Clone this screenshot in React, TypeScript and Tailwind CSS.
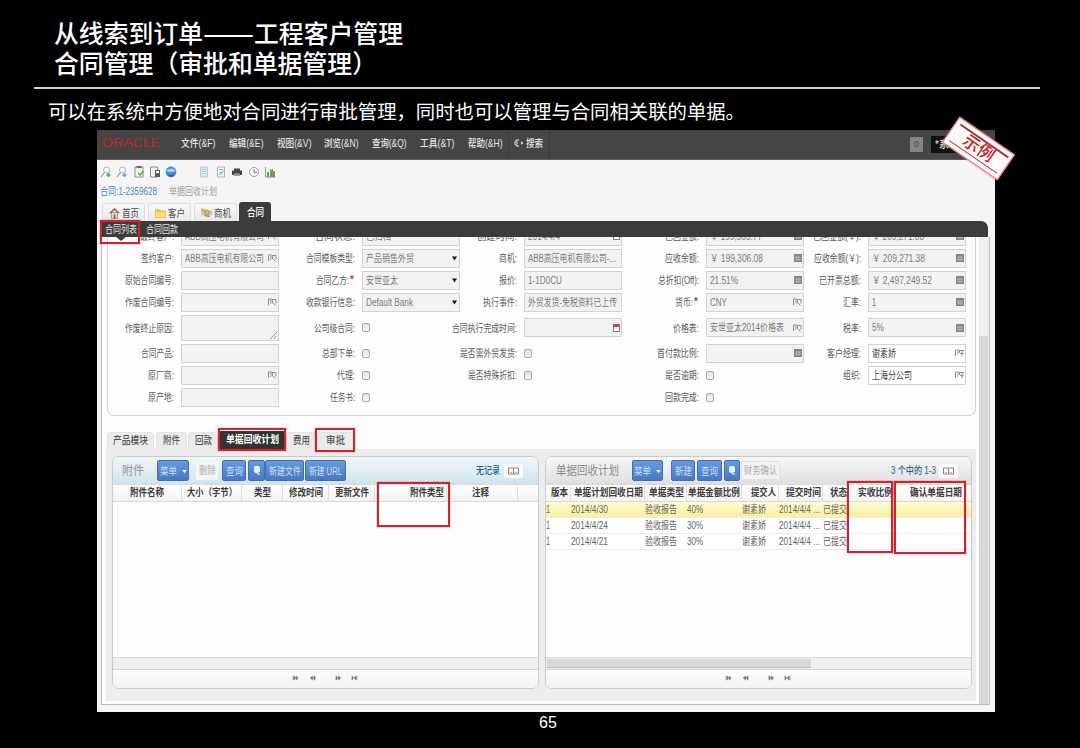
import { useLayoutEffect, useRef } from "react";
import type { ReactNode } from "react";

/** One line of text condensed or stretched to an exact width. */
function Fit({ w, className = "", children }: { w: number; className?: string; children: ReactNode }) {
  const ref = useRef<HTMLSpanElement>(null);
  useLayoutEffect(() => {
    const el = ref.current;
    if (!el) return;
    el.style.transform = "none";
    const natural = el.getBoundingClientRect().width;
    if (natural > 0) el.style.transform = `scaleX(${w / natural})`;
  }, [w, children]);
  return (
    <span className={`block shrink-0 ${className}`} style={{ width: w }}>
      <span ref={ref} className="inline-block origin-left whitespace-nowrap align-top">
        {children}
      </span>
    </span>
  );
}

type FieldKind = "text" | "pick" | "select" | "calc" | "date" | "area" | "check" | "open" | "none";
type Field = { label: string; lw: number; kind: FieldKind; value?: string; vw?: number; required?: boolean };

const f = (label: string, lw: number, kind: FieldKind = "text", value = "", vw = 0, required = false): Field => ({
  label, lw, kind, value, vw, required,
});
const empty = f("", 0, "none");

const formRows: Field[][] = [
  [f("最终客户:", 34, "pick", "ABB高压电机有限公司", 79), f("合同状态:", 40, "text", "已归档", 25), f("创建时间:", 40, "date", "2014/4/4", 32), f("已回金额:", 34, "calc", "￥ 199,305.77", 52), f("已回金额(￥):", 48, "calc", "￥ 209,271.08", 52)],
  [f("签约客户:", 33, "pick", "ABB高压电机有限公司", 79), f("合同模板类型:", 49, "select", "产品销售外贸", 48), f("商机:", 18, "text", "ABB高压电机有限公司-...", 88), f("应收余额:", 34, "calc", "￥ 199,306.08", 53), f("应收余额(￥):", 47, "calc", "￥ 209,271.38", 53)],
  [f("原始合同编号:", 49), f("合同乙方:", 33, "select", "安世亚太", 32, true), f("报价:", 18, "text", "1-1D0CU", 34), f("总折扣(Off):", 41, "calc", "21.51%", 28), f("已开票总额:", 42, "calc", "￥ 2,497,249.52", 60)],
  [f("作废合同编号:", 49, "pick"), f("收款银行信息:", 49, "select", "Default Bank", 47), f("执行事件:", 34, "text", "外贸发货-免税资料已上传", 89), f("货币:", 18, "pick", "CNY", 17, true), f("汇率:", 18, "calc", "1", 4)],
  [f("作废终止原因:", 49, "area"), f("公司级合同:", 41, "check"), f("合同执行完成时间:", 65, "date"), f("价格表:", 26, "pick", "安世亚太2014价格表", 74), f("税率:", 18, "calc", "5%", 12)],
  [f("合同产品:", 33), f("总部下单:", 33, "check"), f("是否需外贸发货:", 57, "check"), f("首付款比例:", 42, "calc"), f("客户经理:", 34, "open", "谢素娇", 24)],
  [f("原厂商:", 26, "pick"), f("代理:", 18, "check"), f("是否特殊折扣:", 49, "check"), f("是否逾期:", 34, "check"), f("组织:", 18, "open", "上海分公司", 40)],
  [f("原产地:", 26), f("任务书:", 25, "check"), empty, f("回款完成:", 34, "check"), empty],
];

function FieldIcon({ kind }: { kind: FieldKind }) {
  if (kind === "select")
    return <svg viewBox="0 0 6 5" className="mr-[1px] h-[5px] w-[5px]"><path d="M0 0h6L3 5z" fill="#111" /></svg>;
  if (kind === "pick" || kind === "open")
    return (
      <svg viewBox="0 0 9 8" className="h-[8px] w-[9px]" fill="none" stroke="#8d8d8d">
        <path d="M.5 7V1h3.500M2 3h2M2 5h1.500M4.500 1v3" />
        <path d={kind === "open" ? "M5 1.500h4M7 1.500v6M5 4.500h3.500" : "M5 1.500h3v4M4 4l3.500 3.500"} />
      </svg>
    );
  if (kind === "calc")
    return (
      <svg viewBox="0 0 8 8" className="h-[8px] w-[8px]">
        <rect width="8" height="8" fill="#858585" />
        <path d="M1 3.2h6M1 5.4h6M2.8 2v5M5 2v5" stroke="#c9c9c9" strokeWidth=".6" />
      </svg>
    );
  if (kind === "date")
    return (
      <svg viewBox="0 0 7 8" className="h-[8px] w-[7px]">
        <rect x=".5" y=".5" width="6" height="7" fill="#fff" stroke="#9a7474" />
        <rect width="7" height="3" fill="#b55058" />
      </svg>
    );
  return null;
}

function FieldBox({ field }: { field: Field }) {
  if (field.kind === "none") return <div />;
  if (field.kind === "check")
    return <div className="h-[9px] w-[8px] rounded-[2px] border border-[#a9a9a9] bg-gradient-to-b from-[#e2e2e2] to-[#f5f5f5]" />;
  const area = field.kind === "area";
  return (
    <div
      className={`flex w-[98px] items-center justify-between border border-[#d3d3d3] pl-[3px] pr-[1px] ${area ? "h-[26px]" : "h-[19px]"} ${field.kind === "open" ? "bg-white text-[#444]" : "bg-[#f2f2f2] text-[#7b7b7b]"}`}
    >
      {field.value ? <Fit w={field.vw ?? 0} className="pt-[1px]">{field.value}</Fit> : <span />}
      {area ? (
        <svg viewBox="0 0 7 7" className="mb-[1px] h-[7px] w-[7px] self-end" stroke="#999"><path d="M0 7 7 0M3.5 7 7 3.5" /></svg>
      ) : (
        <FieldIcon kind={field.kind} />
      )}
    </div>
  );
}

function FormRow({ fields }: { fields: Field[] }) {
  return (
    <div className="grid grid-cols-[66px_105px_76px_105px_57px_105px_77px_105px_57px_105px] items-center">
      {fields.map((field, i) => (
        <div key={i} className="contents">
          <div className="flex items-center justify-end pt-[2px] text-[#5c5c5c]">
            {field.label && <Fit w={field.lw}>{field.label}</Fit>}
            {field.required && <span className="-mt-[2px] w-[6px] text-center font-bold text-[#c4303c]">*</span>}
          </div>
          <div className="pl-[7px]"><FieldBox field={field} /></div>
        </div>
      ))}
    </div>
  );
}

function Magnifier({ color }: { color: string }) {
  return (
    <svg viewBox="0 0 12 12" className="h-[12px] w-[12px]" fill="none">
      <circle cx="6.5" cy="4" r="3" stroke="#a5b3b9" fill="#f5fafc" />
      <path d="M4.5 6.5 1 11" stroke="#8d989d" strokeWidth="1.2" />
      <path d="M6.500 9h4M8.5 7v4" stroke={color} strokeWidth="1.5" />
    </svg>
  );
}

function Toolbar() {
  return (
    <div className="flex h-[22px] items-center pl-[3px] pt-[1px]">
      <div className="flex gap-[4.3px]">
        <Magnifier color="#5b9a5e" />
        <Magnifier color="#6a9cc6" />
        <svg viewBox="0 0 12 12" className="h-[12px] w-[12px]" fill="none"><path d="M2 1h8v10H2z" fill="#f5f8f0" stroke="#87957c" /><path d="M3.5 1h5" stroke="#667" strokeWidth="2" /><path d="m5 7 2 2 3.5-4" stroke="#62a060" strokeWidth="1.5" /></svg>
        <svg viewBox="0 0 12 12" className="h-[12px] w-[12px]" fill="none"><path d="M1.500 1h7v10h-7z" fill="#f4f4ee" stroke="#8b8b80" /><path d="M6 4h5v7H6z" fill="#5d6260" /><path d="M7 5h3v2H7z" fill="#eee" /></svg>
        <svg viewBox="0 0 12 12" className="h-[12px] w-[12px]"><circle cx="6" cy="6" r="5.400" fill="#438fd0" /><path d="M1 5q5-5 10 0-5 2-10 0" fill="#a5d7f4" /><path d="M2 8q4 2 8 0-2 3-4 3T2 8" fill="#2567a9" /></svg>
      </div>
      <div className="ml-[21px] flex gap-[4.5px]">
        <svg viewBox="0 0 12 12" className="h-[12px] w-[12px]"><path d="M2.500 1h7v10h-7z" fill="#dce8eb" stroke="#b4cdd5" /><path d="M4 3.500h4M4 5.500h4M4 7.500h4" stroke="#a5bbc1" strokeWidth=".7" /></svg>
        <svg viewBox="0 0 12 12" className="h-[12px] w-[12px]" fill="none"><path d="M2.500 1h7v10h-7z" fill="#eef6fa" stroke="#9dbdca" /><path d="M4 3.500h4M4 8h3" stroke="#8aabb9" /><path d="m5 6 1.500 1L9 4.500" stroke="#4eaf93" /></svg>
        <svg viewBox="0 0 12 12" className="h-[12px] w-[12px]"><path d="M3 2.500h6v2h2V9H1V4.500h2z" fill="#464646" /><path d="M3 7.500h6V10H3z" fill="#9a9a9a" /></svg>
        <svg viewBox="0 0 12 12" className="h-[12px] w-[12px]" fill="none"><circle cx="6" cy="6" r="4.500" stroke="#9c9c9c" fill="#fff" /><path d="M6 3v3.400h3" stroke="#777" /></svg>
        <svg viewBox="0 0 12 12" className="h-[12px] w-[12px]" fill="none"><path d="M1.500 1v10h10" stroke="#8f9b8e" /><path d="M4 11V6M7 11V3.500M10 11V5" stroke="#6c9c6a" strokeWidth="2" /><path d="M8.500 11V3" stroke="#b58452" /></svg>
      </div>
    </div>
  );
}

function MenuBar() {
  const items = ["文件(&F)", "编辑(&E)", "视图(&V)", "浏览(&N)", "查询(&Q)", "工具(&T)", "帮助(&H)"];
  return (
    <div className="flex h-[30px] shrink-0 items-center border-b border-[#5c5c5c] bg-[#454545] pb-[4px] text-[10.5px] font-medium text-[#e6e6e6]">
      <Fit w={58} className="ml-[5px] text-[13px] text-[#c0262b]">ORACLE</Fit>
      <div className="ml-[21px] flex gap-[13.300px]">
        {items.map((t) => <Fit key={t} w={34.500}>{t}</Fit>)}
      </div>
      <div className="-mb-[4px] ml-[6px] flex h-[29px] w-[42px] items-center gap-[2px] border-x border-[#3a3a3a] pb-[4px] pl-[5px]">
        <svg viewBox="0 0 10 8" className="h-[8px] w-[10px]" fill="none"><path d="M5 1.200A3 3 0 1 0 5 6.800M3 2.500v3" stroke="#c9c9c9" strokeWidth="1.300" /><path d="M7 2.200v3.600L9.500 4z" fill="#ddd" /></svg>
        <Fit w={17}>搜索</Fit>
      </div>
      <div className="-mb-[3px] ml-auto flex h-[15px] w-[13px] items-center justify-center rounded-[1px] bg-[#858585] text-[9px] text-[#484848]">0</div>
      <div className="-mb-[3px] ml-[8px] mr-[14px] flex h-[17px] w-[50px] items-center overflow-hidden bg-[#111] pl-[4px]">
        <Fit w={14}>*系</Fit>
      </div>
    </div>
  );
}

const tabIcons: Record<string, ReactNode> = {
  首页: <svg viewBox="0 0 11 11" className="h-[12px] w-[11px]"><path d="M2.500 5h6v6h-6z" fill="#e9dccb" stroke="#8a7b6e" strokeWidth=".7" /><path d="M0 5.800 5.500.5 11 5.800H8.500v-.5L5.500 2.500l-3 2.800v.5z" fill="#a9523e" /><path d="M4.500 7h2v4h-2z" fill="#7a6d62" /></svg>,
  客户: <svg viewBox="0 0 11 10" className="h-[10px] w-[11px]"><path d="M0 1h4l1 1.500h6V10H0z" fill="#e9c64e" /><path d="M1 4h9v5H1z" fill="#f8df79" /></svg>,
  商机: <svg viewBox="0 0 11 10" className="h-[11px] w-[11px]"><path d="M0 1h4l1 2h6v4L7 10 0 7z" fill="#d4c69c" /><circle cx="6" cy="5" r="2.300" fill="#e3bd48" stroke="#a08a50" strokeWidth=".8" /><path d="m1 2 3 3M4 8l5 1" stroke="#8c8674" /></svg>,
};

function MainTabs() {
  return (
    <div className="flex h-[18px] shrink-0 items-end pl-[5px] text-[10.500px] text-[#4b4b4b]">
      {["首页", "客户", "商机"].map((t) => (
        <div key={t} className="mr-[3px] flex h-[18px] w-[43px] items-center gap-[2px] rounded-t-[3px] border border-b-0 border-[#dedede] bg-gradient-to-b from-[#f8f8f8] to-[#e9e9e9] pl-[6px]">
          {tabIcons[t]}
          <Fit w={17}>{t}</Fit>
        </div>
      ))}
      <div className="-ml-[1px] flex h-[19px] w-[32px] items-center justify-center rounded-t-[3px] bg-[#3c3c3c] pt-[1px] font-medium text-white">
        <Fit w={17}>合同</Fit>
      </div>
    </div>
  );
}

function DetailTabs() {
  const tab = "flex h-[17px] items-center justify-center rounded-t-[4px] border border-b-0 border-[#e4e4e4] bg-[#ebebeb]";
  return (
    <div className="mt-[15px] flex h-[18px] items-end pl-[1px] text-[10px] font-medium text-[#555]">
      <div className={`${tab} w-[47px]`}><Fit w={35}>产品模块</Fit></div>
      <div className={`${tab} ml-[2px] w-[31px]`}><Fit w={17}>附件</Fit></div>
      <div className={`${tab} ml-[1px] w-[30px]`}><Fit w={17}>回款</Fit></div>
      <div className="ml-[2px] flex h-[18px] w-[65px] shrink-0 items-center justify-center bg-[#333] font-bold text-white"><Fit w={53}>单据回收计划</Fit></div>
      <div className={`${tab} ml-[1px] w-[31px]`}><Fit w={17}>费用</Fit></div>
      <div className={`${tab} w-[37px]`}><Fit w={19}>审批</Fit></div>
    </div>
  );
}

function Button({ children, className }: { children: ReactNode; className: string }) {
  return (
    <div className={`flex h-[21px] shrink-0 items-center justify-center gap-[5px] rounded-[2px] border border-[#426fae] bg-gradient-to-b from-[#679bdd] to-[#4779c2] pt-[2px] text-[10px] text-[#c9dff8] ${className}`}>
      {children}
    </div>
  );
}

const Caret = () => <svg viewBox="0 0 6 4" className="h-[3px] w-[5px]"><path d="M0 0h6L3 4z" fill="#fff" /></svg>;
const Bulb = () => (
  <svg viewBox="0 0 8 10" className="mb-[2px] h-[10px] w-[8px]"><path d="M1.500 0h4.500l1 2v4H5.500V7h-3L1 5.500V2z" fill="#e5f4fb" /><path d="M3.500 7h3.500v2H4z" fill="#a5c7ee" /></svg>
);
const Book = () => (
  <div className="flex h-[14px] w-[19px] items-center justify-center bg-[#fafafa]">
    <svg viewBox="0 0 11 8" className="h-[8px] w-[11px]" fill="none" stroke="#858585"><path d="M.5 1h4.500l.5.500.5-.5h4.500v6h-10zM5.500 1v6" /><path d="M2 5.500h2M7 5.500h2" strokeWidth=".6" /></svg>
  </div>
);

function Pager({ className }: { className: string }) {
  const icons = ["M1 1v5M2 1l2.500 2.500L2 6zM5 1l2 2.500L5 6z", "M4 1 1.500 3.500 4 6zM7 1 4.500 3.500 7 6z", "M1 1l2.500 2.500L1 6zM4 1l2.500 2.500L4 6z", "M1 1l2 2.500L1 6zM6 1 3.500 3.500 6 6zM7 1v5"];
  return (
    <div className={`flex h-[19px] shrink-0 items-center rounded-b-[5px] border-t border-[#d5d5d5] bg-gradient-to-b from-[#fcfcfc] to-[#f3f3f3] pb-[2px] ${className}`}>
      {icons.map((d, i) => (
        <svg key={i} viewBox="0 0 8 7" className={`h-[6px] w-[7px] ${i === 2 ? "ml-[19px]" : i ? "ml-[9.500px]" : ""}`}><path d={d} fill="#777" stroke="#777" strokeWidth=".6" /></svg>
      ))}
    </div>
  );
}

function HeadCell({ w, children, className = "justify-center", line = true }: { w: number; children?: string; className?: string; line?: boolean }) {
  return (
    <div className={`flex items-center overflow-hidden ${line ? "border-r border-[#dedede]" : ""} ${className}`}>
      {children && <Fit w={w}>{children}</Fit>}
    </div>
  );
}

function AttachmentPanel() {
  return (
    <section className="flex w-[427px] shrink-0 flex-col rounded-[7px] border border-[#cacaca] bg-[#fdfdfd]">
      <div className="flex h-[27px] shrink-0 items-center rounded-t-[6px] bg-gradient-to-b from-[#f0f6f8] to-[#cfe4ed] pl-[9px]">
        <Fit w={22} className="text-[12.500px] text-[#8b9499]">附件</Fit>
        <Button className="ml-[13px] w-[32px]"><Fit w={17}>菜单</Fit><Caret /></Button>
        <div className="ml-[7px] flex h-[18px] w-[22px] items-center justify-center bg-[#f3f4f4] text-[10px] text-[#b1b1b1]"><Fit w={17}>删除</Fit></div>
        <Button className="ml-[4px] w-[24px]"><Fit w={17}>查询</Fit></Button>
        <Button className="ml-[2px] w-[17px]"><Bulb /></Button>
        <Button className="w-[39px]"><Fit w={32}>新建文件</Fit></Button>
        <Button className="ml-[1px] w-[41px]"><Fit w={33}>新建 URL</Fit></Button>
        <Fit w={24} className="ml-[130px] text-[10px] font-medium text-[#286287]">无记录</Fit>
        <div className="ml-[4px]"><Book /></div>
      </div>
      <div className="grid h-[18px] shrink-0 grid-cols-[69px_60px_41px_46px_46px_72px_71px_1fr] border-y border-[#d9d9d9] bg-gradient-to-b from-white to-[#f3f3f3] text-[10px] font-bold text-[#3c3c3c]">
        <HeadCell w={34}>附件名称</HeadCell>
        <HeadCell w={50}>大小（字节）</HeadCell>
        <HeadCell w={17}>类型</HeadCell>
        <HeadCell w={34}>修改时间</HeadCell>
        <HeadCell w={34}>更新文件</HeadCell>
        <HeadCell w={34} className="justify-end pr-[2px]">附件类型</HeadCell>
        <HeadCell w={17} className="justify-center pr-[3px]">注释</HeadCell>
        <HeadCell w={0} line={false} />
      </div>
      <div className="flex-1" />
      <div className="h-[12px] shrink-0 border-t border-[#d9d9d9] bg-[#efefef]" />
      <Pager className="pl-[179px]" />
    </section>
  );
}

const planRows = [
  { date: "2014/4/30", pct: "40%" },
  { date: "2014/4/24", pct: "30%" },
  { date: "2014/4/21", pct: "30%" },
];
const planCols = "grid grid-cols-[25px_74px_42px_55px_37px_44px_25px_46px_1fr]";

function PlanPanel() {
  return (
    <section className="ml-[6px] flex w-[427px] shrink-0 flex-col rounded-[7px] border border-[#cacaca] bg-[#fdfdfd]">
      <div className="flex h-[27px] shrink-0 items-center rounded-t-[6px] bg-gradient-to-b from-[#f7f7f7] to-[#dfdfdf] pl-[10px]">
        <Fit w={63} className="text-[12.500px] text-[#8b8b8b]">单据回收计划</Fit>
        <Button className="ml-[13px] w-[31px]"><Fit w={17}>菜单</Fit><Caret /></Button>
        <Button className="ml-[8px] w-[24px]"><Fit w={17}>新建</Fit></Button>
        <Button className="ml-[2px] w-[25px]"><Fit w={17}>查询</Fit></Button>
        <Button className="ml-[2px] w-[16px]"><Bulb /></Button>
        <div className="ml-[1px] flex h-[19px] w-[39px] items-center justify-center border border-[#e3e3e3] bg-[#f2f2f2] pt-[1px] text-[10px] text-[#a9a9a9]"><Fit w={33}>财务确认</Fit></div>
        <Fit w={45} className="ml-[111px] text-[10px] font-medium text-[#315f92]">3 个中的 1-3</Fit>
        <div className="ml-[3px]"><Book /></div>
      </div>
      <div className={`${planCols} h-[18px] shrink-0 border-y border-[#d9d9d9] bg-gradient-to-b from-white to-[#f3f3f3] text-[10px] font-bold text-[#3c3c3c]`}>
        <HeadCell w={17} className="justify-end pr-[2px]">版本</HeadCell>
        <HeadCell w={69} className="justify-end pr-[1px]">单据计划回收日期</HeadCell>
        <HeadCell w={35} className="justify-end pr-[2px]">单据类型</HeadCell>
        <HeadCell w={52}>单据金额比例</HeadCell>
        <HeadCell w={25} className="justify-end pr-[2px]">提交人</HeadCell>
        <HeadCell w={35} className="justify-end pr-[1px]">提交时间</HeadCell>
        <HeadCell w={17} className="justify-end">状态</HeadCell>
        <HeadCell w={35} className="justify-end">实收比例</HeadCell>
        <HeadCell w={52} className="justify-end pr-[9px]" line={false}>确认单据日期</HeadCell>
      </div>
      <div className="flex-1 text-[10px] text-[#666]">
        {planRows.map((r, i) => (
          <div key={r.date} className={`${planCols} h-[16px] items-center border-b border-[#ececec] ${i === 0 ? "bg-gradient-to-b from-[#fffbd6] to-[#fbf09c]" : "bg-white"}`}>
            <Fit w={4}>1</Fit>
            <Fit w={37}>{r.date}</Fit>
            <Fit w={32}>验收报告</Fit>
            <Fit w={16}>{r.pct}</Fit>
            <Fit w={24}>谢素娇</Fit>
            <Fit w={41}>2014/4/4 ...</Fit>
            <Fit w={24}>已提交</Fit>
          </div>
        ))}
      </div>
      <div className="flex h-[12px] shrink-0 items-center border-t border-[#d9d9d9] bg-[#efefef] pl-px">
        <div className="h-[9px] w-[264px] border-b border-[#bdbdbd] bg-[#d8d8d8]" />
      </div>
      <Pager className="pl-[179px]" />
    </section>
  );
}

function Stamp() {
  return (
    <div className="absolute left-[945px] top-[133px] flex h-[31px] w-[67px] rotate-[34.500deg] flex-col items-center justify-between border border-[#d88] bg-[#fffafa] py-[4px] shadow-[0_0_2px_#d33]">
      <div className="h-[1.500px] w-[58px] bg-[#a9333c]" />
      <span className="text-[17px] font-medium leading-[16px] text-[#c0202c]">示例</span>
      <div className="h-[1.500px] w-[58px] bg-[#a9333c]" />
    </div>
  );
}

const mark = "absolute border-2 border-[#cb2530] shadow-[0_0_1px_#cb2530]";

export default function App() {
  return (
    <main className="relative flex h-[748px] w-[1080px] flex-col overflow-hidden bg-black font-['Liberation_Sans','Noto_Sans_CJK_SC',sans-serif] text-white">
      <header className="h-[87px] shrink-0 pl-[54px] pt-[17px] font-['Noto_Sans_CJK_SC',sans-serif] text-[25px] font-medium leading-[30px]">
        <div className="flex">
          <Fit w={149}>从线索到订单</Fit>
          <Fit w={51}>——</Fit>
          <Fit w={149}>工程客户管理</Fit>
        </div>
        <Fit w={323}>合同管理（审批和单据管理）</Fit>
      </header>
      <div className="ml-[34px] h-[2px] w-[1006px] shrink-0 bg-[#cfcfcf]" />
      <p className="h-[41px] shrink-0 pl-[48px] pt-[7px] font-['Noto_Sans_CJK_SC',sans-serif] text-[19.500px] leading-[30px]">
        <Fit w={697}>可以在系统中方便地对合同进行审批管理，同时也可以管理与合同相关联的单据。</Fit>
      </p>

      <div className="ml-[97px] flex h-[582px] w-[898px] shrink-0 flex-col bg-[#f5f5f5] text-[10px] leading-[14px]">
        <MenuBar />
        <Toolbar />
        <div className="flex h-[21px] shrink-0 items-center pb-[1px] pl-[3px]">
          <Fit w={57} className="text-[#4a86c8]">合同:1-2359628</Fit>
          <Fit w={48} className="ml-[12px] text-[#a3a3a3]">单据回收计划</Fit>
        </div>
        <MainTabs />
        <nav className="ml-[4px] mr-[7px] flex h-[16px] shrink-0 items-center rounded-tr-[7px] bg-[#3c3c3c] pl-[4px] pt-[2px] text-[#e4e4e4]">
          <Fit w={32}>合同列表</Fit>
          <Fit w={32} className="ml-[9px]">合同回款</Fit>
        </nav>

        <div className="ml-[4px] mr-[5px] flex h-[468px] shrink-0 border-x border-b border-[#bcbcbc] bg-[#fdfdfd]">
          <div className="flex w-[874px] shrink-0 flex-col pl-[4px]">
            <div className="ml-[1px] h-[179px] w-[869px] shrink-0 overflow-hidden rounded-b-[7px] border border-t-0 border-[#d5d5d5]">
              <div className="-mt-[12px] grid grid-rows-[22px_22px_22px_22px_29px_22px_22px_22px]">
                {formRows.map((fields, i) => <FormRow key={i} fields={fields} />)}
              </div>
            </div>
            <DetailTabs />
            <div className="flex h-[252px] w-[870px] shrink-0 bg-[#ededed] pb-[12px] pl-[6px] pt-[7px]">
              <AttachmentPanel />
              <PlanPanel />
            </div>
          </div>
          <div className="ml-[3px] w-[10px] bg-[#efefef] pt-[99px]">
            <div className="h-full w-[9px] border-x border-[#cecece] bg-[#d9d9d9]" />
          </div>
        </div>
      </div>

      <footer className="pl-[16px] pt-[2px] text-center text-[16px] leading-[18px]">65</footer>

      <svg viewBox="0 0 12 5" className="absolute left-[115px] top-[237px] h-[4px] w-[12px]"><path d="M0 0h12L6 5z" fill="#3c3c3c" /></svg>
      <div className={`${mark} left-[100px] top-[220px] h-[24px] w-[40px]`} />
      <div className={`${mark} left-[218px] top-[428px] h-[23px] w-[68px]`} />
      <div className={`${mark} left-[315px] top-[428px] h-[24px] w-[40px]`} />
      <div className={`${mark} left-[377px] top-[482px] h-[45px] w-[73px]`} />
      <div className={`${mark} left-[847px] top-[481px] h-[72px] w-[46px]`} />
      <div className={`${mark} left-[894px] top-[481px] h-[73px] w-[72px]`} />
      <Stamp />
    </main>
  );
}
